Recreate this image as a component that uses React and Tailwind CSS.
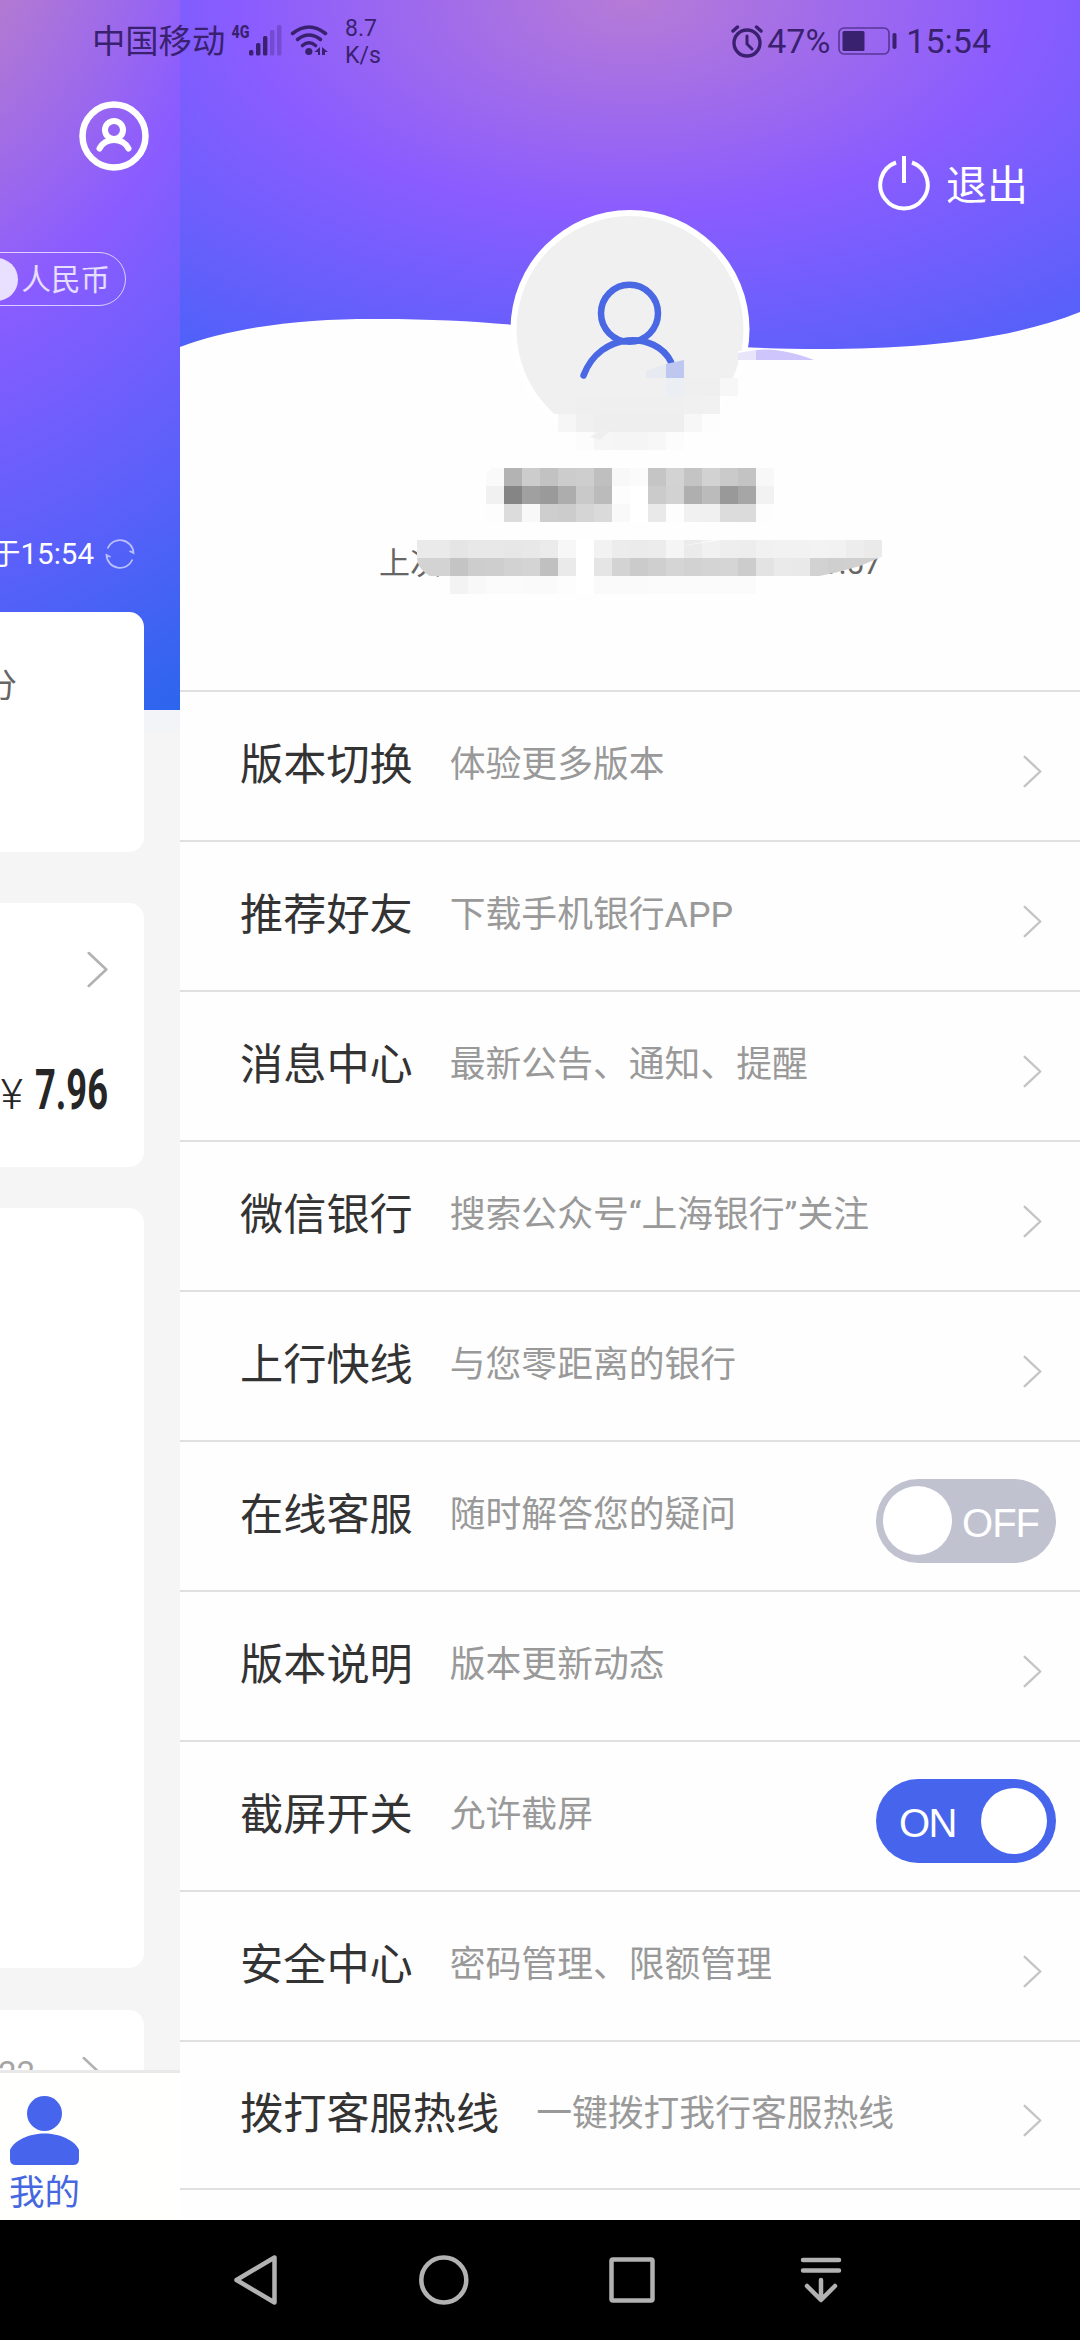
import React from "react";

const FONT = "font-[Roboto,'Noto_Sans_CJK_SC',sans-serif]";

const menuItems = [
  { title: "版本切换", desc: "体验更多版本" },
  { title: "推荐好友", desc: "下载手机银行APP" },
  { title: "消息中心", desc: "最新公告、通知、提醒" },
  { title: "微信银行", desc: "搜索公众号“上海银行”关注" },
  { title: "上行快线", desc: "与您零距离的银行" },
  { title: "在线客服", desc: "随时解答您的疑问", toggle: "off" },
  { title: "版本说明", desc: "版本更新动态" },
  { title: "截屏开关", desc: "允许截屏", toggle: "on" },
  { title: "安全中心", desc: "密码管理、限额管理" },
  { title: "拨打客服热线", desc: "一键拨打我行客服热线" },
];

// 18px mosaic tiles: y, first column, grey levels
const CELL = 18;
const mosaic = [
  { y: 378, col: 37, tiles: ["#ebeef2", "#efeff0", "#efeff0", "#f7f7f7"] },
  { y: 396, col: 32, tiles: ["#efefef", "#efefef", "#efefef", "#efefef", "#efefef", "#efefef", "#f0f0f0", "#f1f1f1"] },
  { y: 414, col: 31, tiles: ["#f6f6f6", "#f0f0f0", "#eeeeee", "#eeeeee", "#eeeeee", "#eeeeee", "#eeeeee", "#f7f7f7", "#fdfdfd"] },
  { y: 432, col: 32, tiles: ["#fcfcfc", "#f6f6f6", "#f5f5f5", "#f5f5f5", "#f7f7f7", "#fcfcfc"] },
  { y: 468, col: 27, tiles: ["#fafafa", "#b3b3b3", "#cccccc", "#c2c2c2", "#cccccc", "#cecece", "#bfbfbf", "#f8f8f8", "#fbfbfb", "#c5c5c5", "#d3d3d3", "#c4c4c4", "#d2d2d2", "#cacaca", "#c3c3c3", "#f8f8f8"] },
  { y: 486, col: 27, tiles: ["#f1f1f1", "#858585", "#a0a0a0", "#9a9a9a", "#adadad", "#c9c9c9", "#bbbbbb", "#fdfdfd", "#ffffff", "#cbcbcb", "#d2d2d2", "#afafaf", "#bbbbbb", "#999999", "#a6a6a6", "#f2f2f2"] },
  { y: 504, col: 27, tiles: ["#fdfdfd", "#dcdcdc", "#f8f8f8", "#cecece", "#cccccc", "#d5d5d5", "#dadada", "#f9f9f9", "#ffffff", "#e9e9e9", "#fdfdfd", "#f1f1f1", "#f0f0f0", "#dcdcdc", "#dbdbdb", "#fdfdfd"] },
  { y: 540, col: 23, tiles: ["#eaeaea", "#eaeaea", "#e5e5e5", "#e8e8e8", "#e8e8e8", "#e7e7e7", "#e8e8e8", "#ebebeb", "#f7f7f7", "#ffffff", "#f2f2f2", "#ececec", "#ebebeb", "#ececec", "#f5f5f5", "#ebebeb", "#f1f1f1", "#eeeeee", "#ededed", "#f1f1f1", "#f2f2f2", "#f2f2f2", "#f3f3f3", "#f2f2f2", "#ededed", "#eaeaea"] },
  { y: 558, col: 22, tiles: ["#d6d6d6", "#d3d3d3", "#d3d3d3", "#c4c4c4", "#cdcdcd", "#cecece", "#d2d2d2", "#d4d4d4", "#c0c0c0", "#eaeaea", "#ffffff", "#e5e5e5", "#d3d3d3", "#cbcbcb", "#cfcfcf", "#d5d5d5", "#d2d2d2", "#d4d4d4", "#d5d5d5", "#cccccc", "#e3e3e3", "#eaeaea", "#e9e9e9", "#d2d2d2", "#cfcfcf", "#d0d0d0", "#d0d0d0"] },
  { y: 576, col: 25, tiles: ["#f3f3f3", "#f8f8f8", "#fbfbfb", "#fbfbfb", "#fafafa", "#fafafa", "#fdfdfd", "#ffffff", "#fafafa", "#fafafa", "#fafafa", "#fbfbfb", "#fbfbfb", "#fbfbfb", "#fbfbfb", "#fbfbfb", "#fbfbfb"] },
];

function Chevron({ className }) {
  return (
    <svg viewBox="0 0 20 36" className={className} fill="none" stroke="currentColor" strokeLinecap="round" strokeLinejoin="round">
      <path d="M1.5 2 18.5 18 1.5 34" strokeWidth="2.6" />
    </svg>
  );
}

function StatusBar() {
  return (
    <div className="absolute inset-x-0 top-0 z-20 flex h-[84px] items-center pl-[92px] text-[#3a2170]">
      <span className="w-[139px] text-[33.3px] leading-none">中国移动</span>
      <svg width="100" height="40" viewBox="231 22 100 40" fill="currentColor">
        <text x="231.5" y="38" fontSize="18" fontWeight="800" textLength="18" lengthAdjust="spacingAndGlyphs">4G</text>
        <rect x="249" y="50" width="4.4" height="5.5" rx="1.5" />
        <rect x="256" y="43" width="4.4" height="12.5" rx="1.5" />
        <rect x="263" y="36" width="4.4" height="19.5" rx="1.5" />
        <g opacity="0.3">
          <rect x="270" y="30" width="4.4" height="25.5" rx="1.5" />
          <rect x="277" y="25" width="4.4" height="30.5" rx="1.5" />
        </g>
        <g fill="none" stroke="currentColor" strokeWidth="3.6" strokeLinecap="round">
          <path d="M292.5 33.5Q309 20.5 325.5 33.5" />
          <path d="M297.5 39.5Q309 30.5 320.5 39.5" />
          <path d="M302.5 45.5Q309 40 315.5 45.5" />
        </g>
        <circle cx="308.8" cy="51.5" r="3.6" />
        <path d="M314.5 52 320 47V55H318V52ZM322 47 328 52H325V55H322Z" />
      </svg>
      <div className="ml-[14px] text-[23px] leading-[27px]">
        <div>8.7</div>
        <div>K/s</div>
      </div>
      <div className="mr-[89px] mb-[2px] ml-auto flex items-center">
        <svg width="32" height="34" viewBox="0 0 32 34" fill="none" stroke="currentColor" strokeLinecap="round">
          <circle cx="16" cy="19" r="13" strokeWidth="3.4" />
          <path d="M2 7 6.5 3M30 7 25.5 3" strokeWidth="3.4" />
          <path d="M16 12V20L21 25" strokeWidth="3" />
        </svg>
        <span className="ml-1 text-[34px] leading-none">47%</span>
        <svg className="ml-2" width="60" height="30" viewBox="0 0 60 30">
          <rect x="1" y="2" width="50" height="26" rx="5" fill="none" stroke="currentColor" strokeWidth="1.6" opacity="0.7" />
          <rect x="4.5" y="5" width="22" height="20" rx="1.5" fill="currentColor" />
          <rect x="54.5" y="7" width="4" height="16" rx="1.8" fill="currentColor" />
        </svg>
        <span className="ml-2 text-[34px] leading-none">15:54</span>
      </div>
    </div>
  );
}

function AccountPage() {
  return (
    <div className="flex w-[180px] flex-none flex-col overflow-hidden bg-[#f5f5f5]">
      <div className="flex h-[732px] flex-none flex-col items-end border-b-[22px] border-[#f2f4f8] bg-[radial-gradient(384px_489px_at_-150px_-150px,#b47bd0_48%,#8b5cff_100%,#5a60fa_152%,#2d65ee_194%)] pt-[101px]">
        <svg className="mr-[31px] flex-none" width="70" height="70" viewBox="0 0 70 70" fill="none" stroke="#fff" strokeLinecap="round">
          <circle cx="35" cy="35" r="31.5" strokeWidth="6.5" />
          <circle cx="35" cy="29" r="9" strokeWidth="6" />
          <path d="M20.5 47.5Q25 39 35 39Q45 39 49.5 47.5" strokeWidth="6" />
        </svg>
        <div className="mt-[81px] mr-[54px] flex h-[54px] w-[200px] flex-none items-center justify-end rounded-full border-[1.5px] border-white/70 pr-[15px] text-[29.5px] leading-none text-white/80">
          <span className="mr-[3px] size-[43px] rounded-full bg-[#e9e0ff]" />
          <span className="mt-[3px]">人民币</span>
        </div>
        <div className="mt-[230px] mr-[45px] flex flex-none items-center whitespace-nowrap text-white">
          <span className="text-[29.5px] leading-9">更新于15:54</span>
          <svg className="ml-[11px]" width="30" height="30" viewBox="0 0 30 30" fill="none" stroke="#fff" strokeWidth="1.8" opacity="0.6">
            <path d="M2.5 9.5A13.500 13.500 0 0 1 28.500 14L24.500 12M27.500 20.500A13.500 13.500 0 0 1 1.500 16L5.500 18" />
          </svg>
        </div>
      </div>
      <div className="mt-[-120px] mr-9 flex h-[240px] flex-none justify-end rounded-r-[15px] bg-white pt-[49px] pr-[127px] text-[33px] whitespace-nowrap text-[#666]">
        积分
      </div>
      <div className="mt-[51px] mr-9 flex h-[264px] flex-none flex-col items-end rounded-r-[15px] bg-white">
        <Chevron className="mt-[48px] mr-[36px] h-[37px] w-[21px] text-[#b2b2b2]" />
        <div className="mt-[74px] flex items-baseline text-[#262626]">
          <span className="mr-[12px] text-[43px] leading-[56px] font-light">¥</span>
          <span className="w-[73px] flex-none origin-left scale-x-[0.66] text-[55px] leading-[56px] font-bold">7.96</span>
          <span className="w-[36px]" />
        </div>
      </div>
      <div className="mt-[41px] mr-9 h-[760px] flex-none rounded-r-[15px] bg-white" />
      <div className="mt-[42px] mr-9 flex h-[60px] flex-none items-start justify-end overflow-hidden rounded-tr-[15px] bg-white text-[33px] text-[#a5a5a5]">
        <span className="mt-[43px] mr-[47px] leading-[42px]">22</span>
        <Chevron className="mt-[46px] mr-[41px] h-[37px] w-[21px] flex-none text-[#b2b2b2]" />
      </div>
      <div className="flex h-[150px] flex-none flex-col border-t-[3px] border-[#e9e9e9] bg-[#fffffd] pt-[22px]">
        <svg className="ml-2 flex-none" width="73" height="72" viewBox="8 2095 73 72" fill="#4765ec">
          <circle cx="44.5" cy="2113.5" r="17.5" />
          <path d="M10 2150C14 2140 30 2133.5 44.5 2133.5S75 2140 79 2150V2159Q79 2165 73 2165H16Q10 2165 10 2159Z" />
        </svg>
        <span className="mt-[2px] ml-[9px] text-[35.5px] leading-[48px] text-[#4667e0]">我的</span>
      </div>
    </div>
  );
}

function ProfileHeader() {
  return (
    <div className="relative h-[690px] flex-none">
      <div className="h-[360px] bg-[radial-gradient(388px_212px_at_452px_0px,#b67bd6_0%,#8b5cff_100%,#4c61f9_205%)]" />
      <svg className="absolute inset-0" width="900" height="690" viewBox="180 0 900 690">
        <path d="M180 347C240 325 310 318.5 380 319C560 319 640 349 820 349C920 349 1010 340 1080 312V690H180Z" fill="#fefefe" />
        <circle cx="630" cy="329.5" r="119.5" fill="#fff" />
        <clipPath id="avatar">
          <path d="M500 200H760V351L738 351V378H720V396H702V414H500Z" />
        </clipPath>
        <circle cx="630" cy="329.5" r="113.5" fill="#f0f0f0" clipPath="url(#avatar)" />
        <g fill="none" stroke="#4a68e4" strokeWidth="6.5" strokeLinecap="round">
          <circle cx="629.5" cy="313.3" r="28.5" />
          <path d="M583.5 375.5C600 331 656 331 671 362" />
        </g>
        <path d="M666 364 684 360V378H666Z" fill="#bec7ef" />
        <path d="M646 371 666 364V378H646Z" fill="#e8eaf1" />
        <path d="M738 353 756 350V360H738Z" fill="#e8e5fb" />
        <path d="M756 350C775 348 795 353 814 360H756Z" fill="#cdc5fb" />
      </svg>
      <div className="absolute inset-x-[199px] top-[543px] flex justify-between text-[31px] leading-[42px] text-[#666]">
        <span>上次</span>
        <span>1:57</span>
      </div>
      <svg className="absolute inset-0" width="900" height="690" viewBox="180 0 900 690">
        <clipPath id="smudge">
          <path d="M500 350H900V549L860 566 834 573 780 584V594H450V583C430 579 417 570 417 557V540L500 460Z" />
        </clipPath>
        <g clipPath="url(#smudge)" shapeRendering="crispEdges">
          {mosaic.map((row) =>
            row.tiles.map((color, i) => (
              <rect key={`${row.y}-${i}`} x={(row.col + i) * CELL} y={row.y} width={CELL} height={CELL} fill={color} />
            ))
          )}
        </g>
        <path d="M676 547 780 528 740 537Z" fill="#fff" />
        <path d="M590 437 630 412 600 440Z" fill="#efefef" />
      </svg>
      <button className="absolute top-[154px] right-[52px] flex h-[60px] items-center text-[41px] leading-none text-white">
        <svg className="mr-[15px]" width="54" height="60" viewBox="876 154 54 60" fill="none" stroke="#fff" strokeWidth="4">
          <path d="M895 162.5A23.7 23.7 0 1 0 911 162.5" />
          <path d="M903 156V183" />
        </svg>
        <span className="mt-1">退出</span>
      </button>
    </div>
  );
}

function Toggle({ state }) {
  if (state === "on") {
    return (
      <div className="mt-[9px] mr-6 ml-auto flex h-[84px] w-[180px] items-center justify-between rounded-full bg-[#4765ec] pr-[9px] pl-[23px] font-['Liberation_Sans',sans-serif] text-[40px] tracking-[-1.5px] text-white">
        <span className="mt-1">ON</span>
        <span className="size-[66px] rounded-full bg-white" />
      </div>
    );
  }
  return (
    <div className="mt-[9px] mr-6 ml-auto flex h-[84px] w-[180px] items-center justify-between rounded-full bg-[#c0c2d0] pr-[17px] pl-[7px] font-['Liberation_Sans',sans-serif] text-[40px] tracking-[-1px] text-white">
      <span className="size-[69px] rounded-full bg-white" />
      <span className="mt-1">OFF</span>
    </div>
  );
}

function MenuRow({ item }) {
  return (
    <div className="flex h-[150px] flex-none items-center border-t-2 border-[#e0e0e0] pl-[60px] whitespace-nowrap last:h-[148px]">
      <span className="text-[43.2px] leading-none text-[#333]">{item.title}</span>
      <span className="ml-[37px] text-[35.8px] leading-none text-[#999]">{item.desc}</span>
      {item.toggle ? (
        <Toggle state={item.toggle} />
      ) : (
        <Chevron className="mt-[11px] mr-[38px] ml-auto h-[33px] w-[19px] text-[#c4c4c4]" />
      )}
    </div>
  );
}

function NavBar() {
  return (
    <div className="h-[120px] flex-none bg-black">
      <svg width="1080" height="120" viewBox="0 2220 1080 120" fill="none" stroke="#b2b2b2" strokeWidth="4.5" strokeLinecap="round" strokeLinejoin="round">
        <path d="M274.5 2257.5V2302.5L236.5 2280Z" />
        <circle cx="443.8" cy="2280" r="22.5" />
        <rect x="611.5" y="2259.5" width="41" height="41" rx="1.5" />
        <path d="M803 2260H839M803 2270.5H839M821 2280V2299M807 2286 821 2300 835 2286" />
      </svg>
    </div>
  );
}

export default function App() {
  return (
    <div className={`relative flex h-[2340px] w-[1080px] flex-col overflow-hidden bg-white ${FONT}`}>
      <StatusBar />
      <div className="flex h-[2220px] flex-none">
        <AccountPage />
        <div className="flex flex-1 flex-col overflow-hidden bg-[#fefefe]">
          <ProfileHeader />
          <div className="flex flex-col border-b-2 border-[#e0e0e0]">
            {menuItems.map((item) => (
              <MenuRow key={item.title} item={item} />
            ))}
          </div>
        </div>
      </div>
      <NavBar />
    </div>
  );
}
